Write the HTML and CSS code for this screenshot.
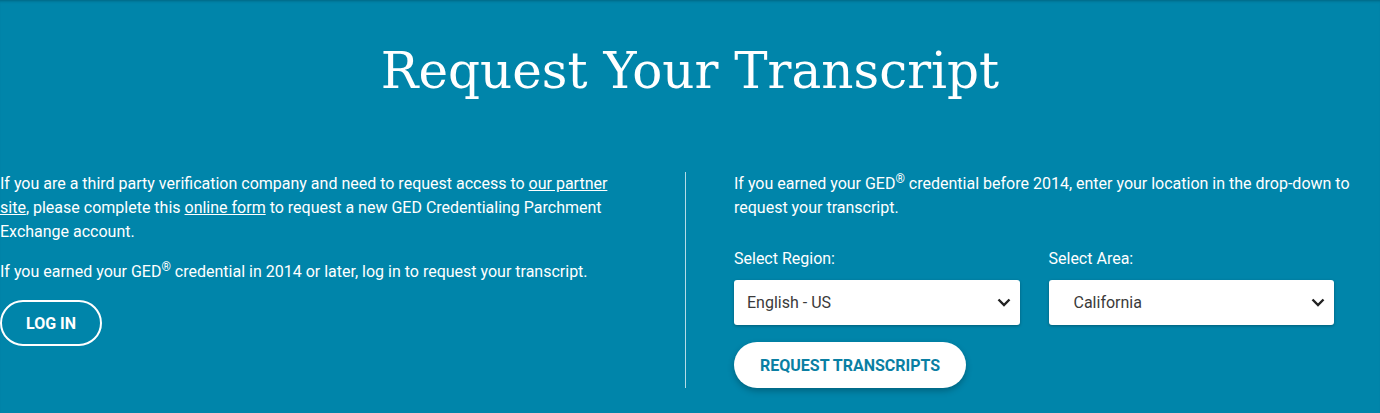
FILE: index.html
```html
<!DOCTYPE html>
<html>
<head>
    <meta name="viewport" content="width=device-width">
    <link rel="stylesheet" href="styles.css">
</head>
<body>
<div class="transcript">
    <h1 class="title">Request Your Transcript</h1>
    <div class="columns">
        <div class="col col-left">
            <p>If you are a third party verification company and need to request access to <a href="#">our partner site</a>, please complete this <a href="#">online form</a> to request a new GED Credentialing Parchment Exchange account.</p>
            <p>If you earned your GED<sup>®</sup> credential in 2014 or later, log in to request your transcript.</p>
            <button class="btn-outline">LOG IN</button>
        </div>
        <div class="col col-right">
            <p>If you earned your GED<sup>®</sup> credential before 2014, enter your location in the drop&#8209;down to request your transcript.</p>
            <div class="selects">
                <div class="field">
                    <label>Select Region:</label>
                    <div class="select">
                        <span>English - US</span>
                        <svg viewBox="0 0 14 9" width="14" height="9"><path d="M1.5 1.5 L7 7 L12.5 1.5" fill="none" stroke="#222" stroke-width="2.4"/></svg>
                    </div>
                </div>
                <div class="field">
                    <label>Select Area:</label>
                    <div class="select select-area">
                        <span>California</span>
                        <svg viewBox="0 0 14 9" width="14" height="9"><path d="M1.5 1.5 L7 7 L12.5 1.5" fill="none" stroke="#222" stroke-width="2.4"/></svg>
                    </div>
                </div>
            </div>
            <button class="btn-solid">REQUEST TRANSCRIPTS</button>
        </div>
    </div>
</div>
</body>
</html>
```

FILE: styles.css
```css
body {
    margin: 0;
    background: #0085aa;
    color: #fff;
    font-family: Roboto, "Liberation Sans", sans-serif;
    font-size: 16px;
    line-height: 24px;
}

.transcript {
    height: 413px;
    box-shadow: inset 0 3px 3px -2px rgba(0,0,0,.25);
    box-sizing: border-box;
    padding-top: 39px;
}

.title {
    margin: 0 0 69px;
    text-align: center;
    font-family: "DejaVu Serif", serif;
    font-weight: normal;
    font-size: 50px;
    line-height: 64px;
}

.columns {
    display: flex;
}

.col-left {
    width: 686px;
    box-sizing: border-box;
    padding-right: 56px;
    border-right: 1px solid rgba(255,255,255,.7);
}

.col-right {
    flex: 1;
    padding-left: 48px;
    padding-right: 20px;
}

p {
    margin: 0 0 16px;
}

a {
    color: #fff;
}

sup {
    font-size: 12px;
    line-height: 0;
}

.btn-outline {
    display: block;
    height: 46px;
    padding: 0 24px;
    border: 2px solid #fff;
    border-radius: 23px;
    background: transparent;
    color: #fff;
    font-family: inherit;
    font-size: 16px;
    font-weight: bold;
}

.selects {
    display: flex;
    gap: 29px;
    width: 600px;
    margin-top: 27px;
}

.field {
    flex: 1;
}

.field label {
    display: block;
    margin-bottom: 9px;
}

.select {
    height: 45px;
    display: flex;
    align-items: center;
    justify-content: space-between;
    padding: 0 9px 0 13px;
    background: #fff;
    border-radius: 3px;
    box-shadow: 0 1px 3px rgba(0,0,0,.3);
    color: #3a3a3a;
}

.select-area {
    padding-left: 25px;
}

.btn-solid {
    display: block;
    margin-top: 17px;
    height: 46px;
    padding: 0 26px;
    border: none;
    border-radius: 23px;
    background: #fff;
    color: #0a7fa3;
    font-family: inherit;
    font-size: 16px;
    font-weight: bold;
    box-shadow: 0 3px 6px rgba(0,0,0,.25);
}
```
